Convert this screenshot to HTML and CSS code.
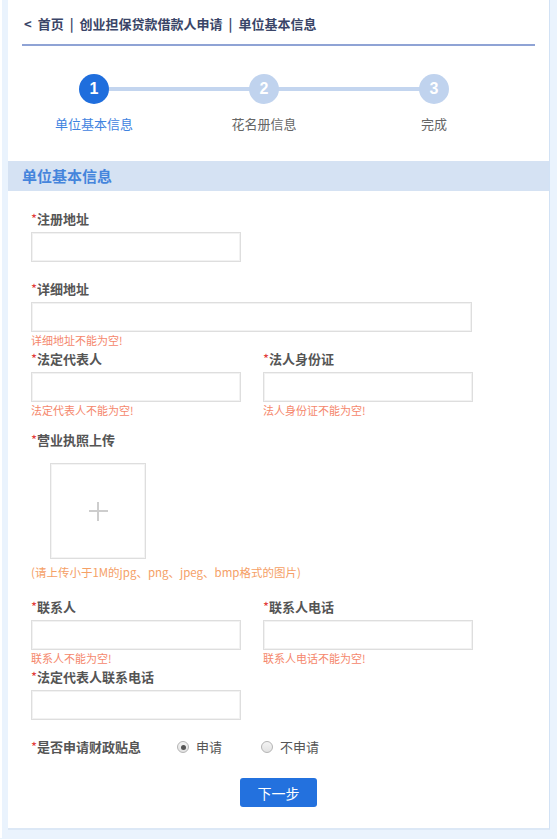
FILE: index.html
```html
<!DOCTYPE html>
<html lang="zh-CN">
<head>
<meta charset="utf-8">
<title>单位基本信息</title>
<link rel="stylesheet" href="styles.css">
</head>
<body>
<div class="page">
  <div class="card">
    <div class="header">
      <div class="crumb"><span>&lt;</span><span>首页</span><span>|</span><span>创业担保贷款借款人申请</span><span>|</span><span>单位基本信息</span></div>
    </div>

    <div class="steps">
      <div class="step active"><span class="dot">1</span><span class="step-label">单位基本信息</span></div>
      <div class="step"><span class="dot">2</span><span class="step-label">花名册信息</span></div>
      <div class="step"><span class="dot">3</span><span class="step-label">完成</span></div>
    </div>

    <div class="band">单位基本信息</div>

    <div class="form">
      <div class="field">
        <div class="label"><span class="star">*</span>注册地址</div>
        <div class="input"></div>
        <div class="err"></div>
      </div>

      <div class="field">
        <div class="label"><span class="star">*</span>详细地址</div>
        <div class="input wide"></div>
        <div class="err">详细地址不能为空!</div>
      </div>

      <div class="row">
        <div class="field">
          <div class="label"><span class="star">*</span>法定代表人</div>
          <div class="input"></div>
          <div class="err">法定代表人不能为空!</div>
        </div>
        <div class="field">
          <div class="label"><span class="star">*</span>法人身份证</div>
          <div class="input"></div>
          <div class="err">法人身份证不能为空!</div>
        </div>
      </div>

      <div class="field upload-field">
        <div class="label"><span class="star">*</span>营业执照上传</div>
        <div class="upload"><span class="plus"></span></div>
        <div class="hint">(请上传小于1M的jpg、png、jpeg、bmp格式的图片)</div>
      </div>

      <div class="row contact-row">
        <div class="field">
          <div class="label"><span class="star">*</span>联系人</div>
          <div class="input"></div>
          <div class="err">联系人不能为空!</div>
        </div>
        <div class="field">
          <div class="label"><span class="star">*</span>联系人电话</div>
          <div class="input"></div>
          <div class="err">联系人电话不能为空!</div>
        </div>
      </div>

      <div class="field">
        <div class="label"><span class="star">*</span>法定代表人联系电话</div>
        <div class="input"></div>
        <div class="err"></div>
      </div>

      <div class="radio-row">
        <div class="label"><span class="star">*</span>是否申请财政贴息</div>
        <div class="radios">
          <span class="opt"><span class="radio checked"></span>申请</span>
          <span class="opt"><span class="radio"></span>不申请</span>
        </div>
      </div>

      <div class="actions">
        <button class="btn" type="button">下一步</button>
      </div>
    </div>
  </div>
</div>
</body>
</html>
```
FILE: styles.css
```css
* { box-sizing: border-box; }

html, body {
  margin: 0;
  padding: 0;
  background: #eaf3fd;
}

body {
  font-family: "Noto Sans CJK SC", "Noto Sans", "Liberation Sans", sans-serif;
  color: #555;
}

.page {
  padding: 0 7px 8px 6px;
  border-left: 2px solid #ffffff;
}

.card {
  background: #fff;
  border-right: 1px solid #d2e2f5;
  border-bottom: 2px solid #dce8f6;
  padding-bottom: 21px;
}

.header {
  padding: 0 14px;
}

.crumb {
  display: flex;
  gap: 6px;
  padding: 15px 2px 11px;
  font-size: 13px;
  line-height: 18px;
  font-weight: bold;
  color: #3a4568;
  border-bottom: 2px solid #8fa3d5;
}

.steps {
  display: grid;
  grid-template-columns: repeat(3, 170px);
  padding-left: 1px;
  margin-top: 28px;
}

.step {
  position: relative;
  display: flex;
  flex-direction: column;
  align-items: center;
}

.step:not(:last-child)::before {
  content: "";
  position: absolute;
  top: 13px;
  left: 50%;
  width: 100%;
  height: 4px;
  background: #c3d5ef;
}

.dot {
  position: relative;
  z-index: 1;
  width: 30px;
  height: 30px;
  border-radius: 50%;
  background: #c0d3ee;
  color: #fff;
  font-weight: bold;
  font-size: 16px;
  line-height: 30px;
  text-align: center;
  font-family: "Liberation Sans", "Noto Sans", sans-serif;
}

.step.active .dot {
  background: #1f6edd;
}

.step-label {
  margin-top: 11px;
  font-size: 13px;
  line-height: 18px;
  color: #666;
}

.step.active .step-label {
  color: #3f83e0;
}

.band {
  margin-top: 28px;
  height: 30px;
  line-height: 30px;
  padding-left: 14px;
  background: #d5e2f3;
  color: #4585dc;
  font-size: 15px;
  font-weight: bold;
}

.form {
  padding: 19px 0 0 23px;
}

.field {
  margin-bottom: 3px;
}

.label {
  font-size: 13px;
  line-height: 18px;
  font-weight: bold;
  color: #555;
  margin-bottom: 4px;
}

.star {
  color: #e23b3b;
  font-weight: normal;
}

.input {
  width: 210px;
  height: 30px;
  border: 1px solid #dedede;
  box-shadow: inset 0 0 0 1px #f2f2f2;
  background: #fff;
}

.input.wide {
  width: 441px;
}

.err {
  margin-top: 1px;
  height: 14px;
  font-size: 11px;
  line-height: 14px;
  color: #f5876c;
}

.row {
  display: grid;
  grid-template-columns: 232px 232px;
}

.upload-field {
  margin-top: 11px;
}

.upload-field .label {
  margin-bottom: 14px;
}

.upload {
  margin-left: 19px;
  width: 96px;
  height: 96px;
  border: 1px solid #dedede;
  box-shadow: inset 0 0 0 1px #f4f4f4;
  display: flex;
  align-items: center;
  justify-content: center;
}

.plus {
  position: relative;
  width: 19px;
  height: 19px;
}

.plus::before,
.plus::after {
  content: "";
  position: absolute;
  background: #cdcdcd;
}

.plus::before {
  left: 0;
  top: 8.5px;
  width: 19px;
  height: 2px;
}

.plus::after {
  top: 0;
  left: 8.5px;
  width: 2px;
  height: 19px;
}

.hint {
  margin-top: 5px;
  font-size: 11.5px;
  line-height: 16px;
  color: #f5a066;
}

.contact-row {
  margin-top: 18px;
}

.radio-row {
  display: flex;
  align-items: center;
  margin-top: 2px;
}

.radio-row .label {
  margin: 0;
  width: 146px;
}

.radios {
  display: flex;
  font-size: 13px;
  color: #555;
  line-height: 18px;
}

.opt {
  display: flex;
  align-items: center;
  width: 84px;
}

.radio {
  width: 12px;
  height: 12px;
  border-radius: 50%;
  border: 1px solid #b4b4b4;
  background: linear-gradient(#f4f4f4, #e2e2e2);
  margin-right: 7px;
  display: flex;
  align-items: center;
  justify-content: center;
}

.radio.checked::after {
  content: "";
  width: 5px;
  height: 5px;
  border-radius: 50%;
  background: #555;
}

.actions {
  display: flex;
  justify-content: center;
  margin-top: 22px;
  margin-left: -23px;
}

.btn {
  width: 77px;
  height: 29px;
  border: 0;
  border-radius: 3px;
  background: #2371de;
  color: #fff;
  font-size: 14px;
  font-family: "Noto Sans CJK SC", "Noto Sans", sans-serif;
  padding: 0;
}
```
